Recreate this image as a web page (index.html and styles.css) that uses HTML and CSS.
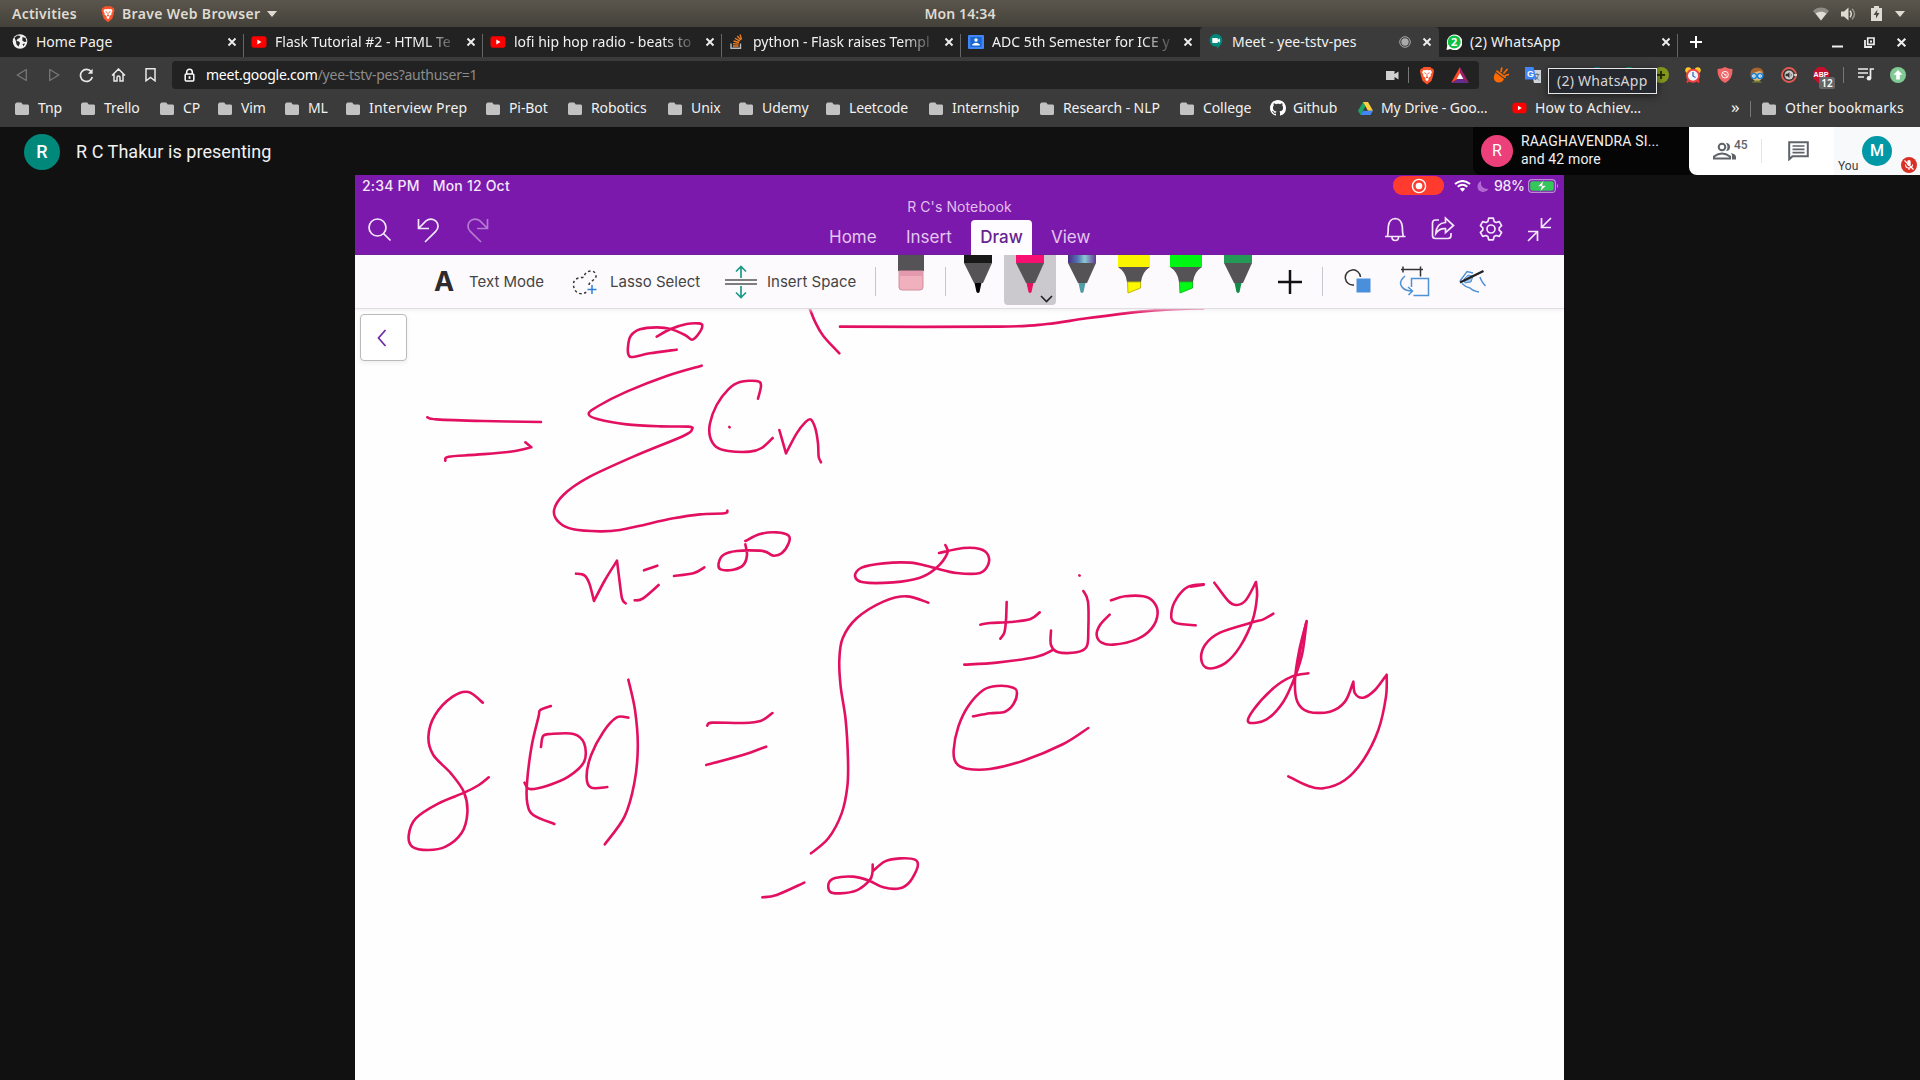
FILE: index.html
```html
<!DOCTYPE html>
<html lang="en">
<head>
<meta charset="utf-8">
<title>Meet - yee-tstv-pes</title>
<link rel="stylesheet" href="styles.css">
</head>
<body>
<svg class="defs" width="0" height="0" aria-hidden="true">
  <symbol id="folder" viewBox="0 0 14 13"><path d="M1.5 0.5h4.7l1.6 2H13l1 1V12l-1 1H1l-1-1V2z" fill="#c2c2c2"/></symbol>
  <symbol id="close" viewBox="0 0 10 10"><path d="M1.5 1.5l7 7M8.500 1.500l-7 7" stroke="#eee" stroke-width="1.9"/></symbol>
  <symbol id="youtube" viewBox="0 0 16 12"><rect x=".5" y=".3" width="15" height="11.400" rx="2.600" fill="#f00"/><path d="M6.300 3.500v5l4.200-2.500z" fill="#fff"/></symbol>
  <symbol id="brave" viewBox="0 0 16 20"><path d="M4.500 1h7l1.500 1.500 1.600.3L15.500 6l-.8 2 .1 1-2 6.500L8 19.500 3.200 15.500 1.200 9l.1-1L.5 6l.9-3.200 1.600-.3z" fill="#fb542b"/><path d="M4.200 4.200l2.600.3 1.200-.6 1.200.6 2.600-.3 1.400 2.500-1.500 2.600.4 1.300-2.600 2 .2 1.800L8 16l-1.700-1.600.2-1.800-2.600-2 .4-1.300-1.500-2.600z" fill="#fff"/><path d="M4.700 6.700l2.200.7-.5 1.400zM11.300 6.700l-2.200.7.5 1.400zM7.500 8h1v3l1 1-1.500.9-1.500-.9 1-1z" fill="#fb542b"/></symbol>
</svg>

<header class="desktop-bar">
  <div class="desktop-left">
    <span class="activities">Activities</span>
    <svg width="14" height="18"><use href="#brave"/></svg>
    <span class="app-name">Brave Web Browser</span>
    <i class="caret"></i>
  </div>
  <span class="clock">Mon 14:34</span>
  <div class="desktop-right">
    <svg width="16" height="14" viewBox="0 0 16 14"><path d="M0 4C4.500-.6 11.500-.6 16 4L8 13.500z" fill="#8f8c85"/><path d="M2.600 6.500c3-2.500 7.800-2.500 10.800 0L8 13.500z" fill="#e0ddd5"/></svg>
    <svg width="16" height="14" viewBox="0 0 16 14"><path d="M0 4.500h3L7.500.5v13L3 9.500H0z" fill="#dedbd3"/><path d="M9 3.800q2.500 3.200 0 6.400" stroke="#dedbd3" stroke-width="1.500" fill="none"/><path d="M11 1.700q5 5.300 0 10.600" stroke="#96928a" stroke-width="1.500" fill="none"/></svg>
    <svg width="11" height="15" viewBox="0 0 11 15"><path d="M0 2h3V0h5v2h3v13H0z" fill="#dedbd3"/><path d="M6.500 3.500L2.500 9H5v3.500L8.500 7H6z" fill="#4b4841"/></svg>
    <i class="caret"></i>
  </div>
</header>

<nav class="tabs">
  <div class="tab"><svg width="15" height="15" viewBox="0 0 15 15"><circle cx="7.500" cy="7.500" r="7.300" fill="#f2f2f2"/><path d="M2 3.500l3-2 3 .5-1 2-2 1-1 2 2.500.5 1 1.500-1.500 3.500-2-2-.5-3zM10 3l3 1 1 3.500-2.200.5-2-1.500zM10 10l2.500-.5-1.500 2.800z" fill="#262626"/></svg><span class="tab-title">Home Page</span><svg class="x" width="10" height="10"><use href="#close"/></svg></div>
  <div class="tab"><svg width="16" height="12"><use href="#youtube"/></svg><span class="tab-title fade">Flask Tutorial #2 - HTML Te</span><svg class="x" width="10" height="10"><use href="#close"/></svg></div>
  <div class="tab"><svg width="16" height="12"><use href="#youtube"/></svg><span class="tab-title fade">lofi hip hop radio - beats to</span><svg class="x" width="10" height="10"><use href="#close"/></svg></div>
  <div class="tab"><svg width="16" height="15" viewBox="0 0 16 15"><path d="M2 9.500v4.700h9.500V9.500" fill="none" stroke="#bbb" stroke-width="1.400"/><path d="M4 12h5.600M4 9.600l5.600.5M4.600 7l5.400 1.500M6 4.300l4.800 2.800M8.300 2l3.500 4.200M11 .5l1.500 5" stroke="#f48024" stroke-width="1.300"/></svg><span class="tab-title fade">python - Flask raises Templ</span><svg class="x" width="10" height="10"><use href="#close"/></svg></div>
  <div class="tab"><svg width="16" height="14" viewBox="0 0 16 14"><rect width="16" height="14" rx="1" fill="#4285f4"/><rect x="2.300" y="2" width="11.400" height="10" fill="#1967d2"/><circle cx="8" cy="5" r="1.700" fill="#fff"/><path d="M4.300 10.500V9.300Q8 6.300 11.700 9.300v1.200z" fill="#fff"/></svg><span class="tab-title fade">ADC 5th Semester for ICE y</span><svg class="x" width="10" height="10"><use href="#close"/></svg></div>
  <div class="tab active"><svg width="15" height="15" viewBox="0 0 15 15"><path d="M7.500 0a6.300 6.300 0 0 1 6.300 6.300c0 3.700-3 6.200-5.300 8.700v-2.500A6.300 6.300 0 1 1 7.500 0z" fill="#00897b"/><path d="M3.800 4h5.400v1.700L11.400 4.300v4.400L9.200 7.300V9H3.800z" fill="#fff"/></svg><span class="tab-title">Meet - yee-tstv-pes</span><svg width="12" height="12" viewBox="0 0 12 12"><circle cx="6" cy="6" r="5.300" fill="none" stroke="#aaa"/><circle cx="6" cy="6" r="3.700" fill="#aaa"/></svg><svg class="x" width="10" height="10"><use href="#close"/></svg></div>
  <div class="tab last"><svg width="16" height="16" viewBox="0 0 16 16"><path d="M.5 16l.8-5A7.800 7.800 0 1 1 4.500 15z" fill="#fff"/><circle cx="8.200" cy="7.900" r="6.500" fill="#0dc143"/><text x="8.200" y="11.800" text-anchor="middle" class="wa-count">2</text></svg><span class="tab-title">(2) WhatsApp</span><svg class="x" width="10" height="10"><use href="#close"/></svg></div>
  <svg class="new-tab" width="12" height="12" viewBox="0 0 12 12"><path d="M6 0v12M0 6h12" stroke="#fff" stroke-width="2"/></svg>
  <div class="window-buttons">
    <svg width="11" height="11" viewBox="0 0 11 11"><path d="M0 9.500h11" stroke="#eee" stroke-width="2"/></svg>
    <svg width="11" height="11" viewBox="0 0 11 11"><path d="M3.700 1h6.300v6.300H3.700z" fill="none" stroke="#eee" stroke-width="1.700"/><path d="M6 3.500h2v2H6z" fill="#eee"/><path d="M1 3v7h7" fill="none" stroke="#eee" stroke-width="1.800"/></svg>
    <svg width="11" height="11"><use href="#close"/></svg>
  </div>
</nav>

<div class="toolbar">
  <div class="nav-buttons">
    <svg width="12" height="14" viewBox="0 0 12 14"><path d="M10.300 1.500v11L1.200 7z" fill="none" stroke="#777" stroke-width="1.300" stroke-linejoin="round"/></svg>
    <svg width="12" height="14" viewBox="0 0 12 14"><path d="M1.700 1.500v11L10.800 7z" fill="none" stroke="#777" stroke-width="1.300" stroke-linejoin="round"/></svg>
    <svg width="15" height="15" viewBox="0 0 15 15"><path d="M12.300 3.800A6 6 0 1 0 13.300 9" fill="none" stroke="#e8e8e8" stroke-width="1.700"/><path d="M13.600.8v5H8.800z" fill="#e8e8e8"/></svg>
    <svg width="15" height="14" viewBox="0 0 15 14"><path d="M1 7.500L7.500 1 14 7.500M3 6v7h3V9.500a1.500 1.500 0 0 1 3 0V13h3V6" fill="none" stroke="#e8e8e8" stroke-width="1.500"/></svg>
    <svg width="11" height="14" viewBox="0 0 11 14"><path d="M1 .8h9v12l-4.500-3.300L1 12.800z" fill="none" stroke="#e8e8e8" stroke-width="1.500"/></svg>
  </div>
  <div class="address">
    <svg width="11" height="14" viewBox="0 0 11 14"><path d="M2.700 6V4a2.800 2.800 0 0 1 5.600 0v2" fill="none" stroke="#fff" stroke-width="1.500"/><rect x="1.200" y="6" width="8.600" height="7" rx="1" fill="none" stroke="#fff" stroke-width="1.500"/><rect x="4.600" y="8.200" width="1.800" height="2.600" fill="#fff"/></svg>
    <span class="url"><b>meet.google.com</b><em>/yee-tstv-pes?authuser=1</em></span>
    <div class="address-actions">
      <svg width="13" height="9" viewBox="0 0 13 9"><path d="M0 0h8.500v3L12.500.5v8L8.500 6v3H0z" fill="#d0d0d0"/></svg>
      <i class="rule"></i>
      <svg width="16" height="19"><use href="#brave"/></svg>
      <svg width="18" height="16" viewBox="0 0 18 16"><path d="M9 0L0 16l9-5z" fill="#ff4724"/><path d="M9 0l9 16-9-5z" fill="#9e1f63"/><path d="M0 16h18l-9-5z" fill="#662d91"/><path d="M9 6l-3.400 6h6.800z" fill="#fff"/></svg>
    </div>
  </div>
  <div class="extensions">
    <svg width="16" height="16" viewBox="0 0 16 16"><path d="M2.500 5.500L11 12Q9.500 15.500 5.500 15.500C2 15.500.3 12.500 1 9z" fill="#ff6a00"/><path d="M4 4.200l8 6M8 4.500L8.800 1M11 6l3-3.500M12.500 8.500l3-1" stroke="#ff6a00" stroke-width="1.700" stroke-linecap="round"/></svg>
    <svg width="16" height="16" viewBox="0 0 16 16"><path d="M6 3h10v13H9z" fill="#d2d5da"/><path d="M0 0h8.500l3.200 12.500H0z" fill="#4285f4"/><path d="M9.500 7.500h5M12 6v1.500M13.500 7.500Q13 11 10 13M10.500 9.500l3.500 4" stroke="#607d8b" stroke-width="1" fill="none"/><text x="2" y="9.500" class="translate-g">G</text></svg>
    <span></span>
    <i class="dot blue"></i>
    <i class="dot teal"></i>
    <svg width="16" height="16" viewBox="0 0 16 16"><circle cx="8" cy="8" r="8" fill="#84981d"/><path d="M8 4v8M4 8h8" stroke="#293000" stroke-width="2"/></svg>
    <svg width="16" height="16" viewBox="0 0 16 16"><circle cx="3.300" cy="3.200" r="3" fill="#ffc928"/><circle cx="12.700" cy="3.200" r="3" fill="#ffc928"/><path d="M3.500 13L2 15.600M12.500 13l1.500 2.600" stroke="#f33" stroke-width="2"/><circle cx="8" cy="8.700" r="6" fill="#eaf6ff" stroke="#f24242" stroke-width="2"/><path d="M8 5v4l2.500 1.500" stroke="#46a" fill="none" stroke-width="1.300"/></svg>
    <svg width="16" height="16" viewBox="0 0 16 16"><path d="M8 0q3.500 2 7.500 2Q16 12 8 16 0 12 .5 2 4.500 2 8 0z" fill="#ef6666"/><circle cx="8" cy="7.700" r="3.300" fill="none" stroke="#fff" stroke-width=".9"/><path d="M5.700 5.400l4.600 4.600M7 7.700h2.500" stroke="#fff" stroke-width=".8"/></svg>
    <svg width="16" height="16" viewBox="0 0 16 16"><path d="M1.500 9Q0 1 8 .5 16 1 14.500 9z" fill="#a8642e"/><path d="M2.500 8Q4 5 11 4q3 1 2.500 5-.5 5-5.500 5T2.500 8z" fill="#e9b878"/><path d="M2.500 15.500q5.500-4 11 0z" fill="#74812b"/><circle cx="4.900" cy="9" r="2.500" fill="#fff" stroke="#1683d8" stroke-width="1.500"/><circle cx="11.100" cy="9" r="2.500" fill="#fff" stroke="#1683d8" stroke-width="1.500"/><path d="M4.500 9h1M10.700 9h1" stroke="#333"/></svg>
    <svg width="16" height="16" viewBox="0 0 16 16"><circle cx="8" cy="8" r="7" fill="#333" stroke="#e55b53" stroke-width="1.800"/><circle cx="8" cy="8" r="4.500" fill="#ccc"/><path d="M4.600 6.800h2L8.500 5v6L6.600 9.200h-2zM9.800 6q1.600 2 0 4" fill="#333"/><path d="M13 8h3" stroke="#eee" stroke-width="1.500"/></svg>
    <div class="abp"><svg width="16" height="16" viewBox="0 0 16 16"><path d="M5 0h6l5 5v6l-5 5H5l-5-5V5z" fill="#c70d2c"/><text x="8" y="9.500" text-anchor="middle" class="abp-text">ABP</text></svg><span class="badge">12</span></div>
  </div>
  <i class="rule"></i>
  <svg class="playlist" width="16" height="13" viewBox="0 0 16 13"><path d="M0 1h10M0 5h10M0 9h6M12.500 10V1H16" fill="none" stroke="#eee" stroke-width="1.700"/><circle cx="11" cy="10.300" r="2.300" fill="#eee"/></svg>
  <svg class="update" width="16" height="16" viewBox="0 0 16 16"><circle cx="8" cy="8" r="8" fill="#81c995"/><path d="M8 3l4.500 4.700H9.800V12.500H6.200V7.700H3.500z" fill="#fff"/></svg>
  <div class="tooltip">(2) WhatsApp</div>
</div>

<div class="bookmarks">
  <a><svg width="14" height="13"><use href="#folder"/></svg>Tnp</a>
  <a><svg width="14" height="13"><use href="#folder"/></svg>Trello</a>
  <a><svg width="14" height="13"><use href="#folder"/></svg>CP</a>
  <a><svg width="14" height="13"><use href="#folder"/></svg>Vim</a>
  <a><svg width="14" height="13"><use href="#folder"/></svg>ML</a>
  <a><svg width="14" height="13"><use href="#folder"/></svg>Interview Prep</a>
  <a><svg width="14" height="13"><use href="#folder"/></svg>Pi-Bot</a>
  <a><svg width="14" height="13"><use href="#folder"/></svg>Robotics</a>
  <a><svg width="14" height="13"><use href="#folder"/></svg>Unix</a>
  <a><svg width="14" height="13"><use href="#folder"/></svg>Udemy</a>
  <a><svg width="14" height="13"><use href="#folder"/></svg>Leetcode</a>
  <a><svg width="14" height="13"><use href="#folder"/></svg>Internship</a>
  <a><svg width="14" height="13"><use href="#folder"/></svg>Research - NLP</a>
  <a><svg width="14" height="13"><use href="#folder"/></svg>College</a>
  <a><svg width="16" height="16" viewBox="0 0 16 16"><path d="M8 0C3.580 0 0 3.580 0 8c0 3.540 2.290 6.530 5.470 7.590.4.070.55-.17.55-.38 0-.19-.01-.82-.01-1.490-2.010.37-2.530-.49-2.690-.94-.09-.23-.48-.94-.82-1.130-.28-.15-.68-.52-.01-.53.63-.01 1.080.58 1.230.82.720 1.210 1.870.87 2.330.66.070-.52.280-.87.510-1.070-1.780-.2-3.640-.89-3.640-3.950 0-.87.310-1.590.82-2.150-.08-.2-.36-1.020.08-2.120 0 0 .67-.21 2.200.82.640-.18 1.320-.27 2-.27s1.360.09 2 .27c1.530-1.040 2.200-.82 2.200-.82.440 1.100.16 1.920.08 2.120.51.560.82 1.270.82 2.150 0 3.070-1.870 3.750-3.650 3.950.29.250.54.730.54 1.480 0 1.070-.01 1.930-.01 2.200 0 .21.15.46.55.38A8 8 0 0 0 16 8c0-4.420-3.580-8-8-8z" fill="#fff"/></svg>Github</a>
  <a><svg width="15" height="13" viewBox="0 0 15 13"><path d="M5 0L0 8.700 2.500 13l5-8.700z" fill="#1fa463"/><path d="M5 0h5l5 8.700h-5z" fill="#ffcf40"/><path d="M5 8.700h10L12.500 13h-10z" fill="#4285f4"/></svg>My Drive - Goo…</a>
  <a><svg width="15" height="12"><use href="#youtube"/></svg>How to Achiev…</a>
  <span class="more">»</span>
  <i class="rule"></i>
  <a><svg width="14" height="13"><use href="#folder"/></svg>Other bookmarks</a>
</div>

<main class="meet">
  <div class="presenter"><span class="avatar green">R</span>R C Thakur is presenting</div>
  <section class="meet-panel">
    <div class="people"><span class="avatar pink">R</span><p>RAAGHAVENDRA SI...<br>and 42 more</p></div>
    <div class="meet-actions">
      <svg class="group" width="25" height="18" viewBox="0 0 25 18"><circle cx="9" cy="5" r="3.300" fill="none" stroke="#5f6368" stroke-width="2"/><path d="M1 16.500v-2Q9 8.500 17 14.500v2z" fill="none" stroke="#5f6368" stroke-width="2"/><path d="M13 1q4 0 4 4t-4 4q3-4 0-8zM18 11q5 1 5 4v2.500h-4V14q0-1.700-1-3z" fill="#5f6368"/></svg><sup>45</sup>
      <i></i>
      <svg width="21" height="20" viewBox="0 0 21 20"><path d="M1.200 1.200h18.600v14H4.500L1.200 18.300z" fill="none" stroke="#5f6368" stroke-width="2"/><path d="M4.500 5h12M4.500 8.300h12M4.500 11.600h12" stroke="#5f6368" stroke-width="1.700"/></svg>
    </div>
    <div class="self"><span class="you">You</span><span class="avatar cyan">M</span>
      <svg class="muted" width="16" height="16" viewBox="0 0 16 16"><circle cx="8" cy="8" r="8" fill="#d93025"/><rect x="6.300" y="3" width="3.400" height="6" rx="1.700" fill="#fff"/><path d="M4.500 7.500q0 3.500 3.500 3.500t3.500-3.500M8 11v2M3.500 3.500l9 9" fill="none" stroke="#fff" stroke-width="1.100"/></svg>
    </div>
  </section>

  <section class="shared">
    <div class="note-head">
      <div class="status">
        <span class="time">2:34 PM</span><span class="date">Mon 12 Oct</span>
        <span class="record"><svg width="16" height="16" viewBox="0 0 16 16"><circle cx="8" cy="8" r="6.600" fill="none" stroke="#fff" stroke-width="1.400"/><circle cx="8" cy="8" r="3.300" fill="#fff"/></svg></span>
        <svg width="17" height="12" viewBox="0 0 17 12"><path d="M1 4Q8.500-2 16 4M3.700 6.700q4.800-4 9.600 0" fill="none" stroke="#fff" stroke-width="2"/><path d="M5.800 8.800q2.700-2 5.400 0L8.500 11.800z" class="wifi-dot"/></svg>
        <svg class="moon" width="12" height="13" viewBox="0 0 12 13"><path d="M4 1Q3 9 11.500 9 9 12.500 5.500 12 .5 11 .5 6.500.5 3 4 1z" fill="#b268d3"/></svg>
        <span class="percent">98%</span>
        <svg width="31" height="14" viewBox="0 0 31 14"><rect x=".6" y=".6" width="26.800" height="12.800" rx="3.500" fill="none" stroke="#bd8ad6" stroke-width="1.200"/><rect x="2.200" y="2.200" width="23.600" height="9.600" rx="2" fill="#34c759"/><path d="M29 4.800q2 2.200 0 4.400z" fill="#bd8ad6"/><path d="M15.500 1.500L9.500 7.500h4l-1.500 5 6.500-6h-4z" fill="#fff" stroke="#34a050" stroke-width=".5"/></svg>
      </div>
      <div class="note-left">
        <svg width="23" height="23" viewBox="0 0 23 23"><circle cx="9.500" cy="9.500" r="8.500"/><path d="M15.500 15.500l7 7"/></svg>
        <svg width="23" height="24" viewBox="0 0 23 24"><path d="M1.500 1v9.500H12M1.500 10.500L9 2.900C13.500-.8 21 1.500 21 8.500c0 2.500-1.200 3.900-2.500 5.200L8 24"/></svg>
        <svg class="dim" width="23" height="24" viewBox="0 0 23 24"><path d="M21.500 1v9.500H11M21.500 10.500L14 2.900C9.500-.8 2 1.500 2 8.500c0 2.500 1.200 3.900 2.500 5.200L15 24"/></svg>
      </div>
      <div class="note-middle">
        <div class="note-title">R C's Notebook</div>
        <div class="note-tabs"><span>Home</span><span>Insert</span><span class="selected">Draw</span><span>View</span></div>
      </div>
      <div class="note-right">
        <svg width="23" height="25" viewBox="0 0 23 25"><path d="M1 19.500h20.500M3.500 19.500c.5-3 .8-5 .8-10Q5 2 11.300 1.500 17.500 2 18.300 9.500q0 6 1 10M8 20q0 3.500 3.300 3.500T14.500 20"/></svg>
        <svg width="24" height="23" viewBox="0 0 24 23"><path d="M8 3H4.500Q1.500 3 1.500 6v12.500q0 3 3 3H17q3 0 3-3v-2.500M14.500 1.200L22.500 8.500l-8 7.200v-4Q8.500 11 4.800 16.500 5.500 6 14.500 5.500z"/></svg>
        <svg width="24" height="24" viewBox="0 0 24 24"><path d="M9.700 1.200h4.600l.8 3.200 2 1.100 3.200-.9 2.300 4-2.400 2.300v2.200l2.400 2.300-2.300 4-3.200-.9-2 1.100-.8 3.200H9.700l-.8-3.200-2-1.100-3.200.9-2.300-4 2.400-2.300v-2.200L1.400 8.600l2.300-4 3.200.9 2-1.100z" stroke-linejoin="round"/><circle cx="12" cy="12" r="4"/></svg>
        <svg width="25" height="25" viewBox="0 0 25 25"><path d="M24 1L14.500 10.500M14.500 1v9.500H24M1 24l9.500-9.500M1 14.500h9.500V24"/></svg>
      </div>
    </div>

    <div class="ribbon">
      <div class="tool"><strong>A</strong><span>Text Mode</span></div>
      <div class="tool lasso"><svg width="26" height="27" viewBox="0 0 26 27"><path d="M17 16C17 12 25 11 24 6 23 0 13 1 12 8 9 9 1 8 1.500 16 2 26 12 26 14 23" fill="none" stroke="#333" stroke-width="1.500" stroke-dasharray="2.500 2.500"/><path d="M20 16v9M15.500 20.500h9" stroke="#2b80d8" stroke-width="1.500"/></svg><span>Lasso Select</span></div>
      <div class="tool space"><svg width="34" height="34" viewBox="0 0 34 34"><path d="M1 15h32M1 19h32" stroke="#555" stroke-width="1.500"/><path d="M17 13V1.500M12 6.500l5-5 5 5M17 21v11.500M12 27.500l5 5 5-5" fill="none" stroke="#1c9a88" stroke-width="1.700"/></svg><span>Insert Space</span></div>
      <i></i>
      <svg class="pen" width="28" height="36" viewBox="0 0 28 36"><path d="M1 0h26v16H1z" fill="#555355"/><path d="M2 16h24v16q0 3-3 3H5q-3 0-3-3z" fill="#f0b0bd" stroke="#cf8e9f"/><path d="M2 16h24v5H2z" fill="#e399ae"/></svg>
      <i></i>
      <svg class="pen" width="30" height="40" viewBox="0 0 30 40"><path d="M1 0h28v8H1z" fill="#181818"/><path d="M1 8h28L20 28h-9z" fill="#555355"/><path d="M11.500 28h7L16.500 37q-1.500 2-3 0z" fill="#000"/></svg>
      <div class="pen-selected"><svg class="pen" width="30" height="40" viewBox="0 0 30 40"><path d="M1 0h28v8H1z" fill="#f70f72"/><path d="M1 8h28L20 28h-9z" fill="#555355"/><path d="M11.500 28h7L16.500 37q-1.500 2-3 0z" fill="#e8115f"/></svg><svg class="chevron" width="13" height="8" viewBox="0 0 13 8"><path d="M1 1l5.500 5.500L12 1" fill="none" stroke="#222" stroke-width="1.600"/></svg></div>
      <svg class="pen" width="30" height="40" viewBox="0 0 30 40"><defs><linearGradient id="galaxy"><stop stop-color="#4d2b84"/><stop offset=".35" stop-color="#5276b4"/><stop offset=".6" stop-color="#8acad3"/><stop offset="1" stop-color="#633792"/></linearGradient></defs><path d="M1 0h28v8H1z" fill="url(#galaxy)"/><path d="M1 8h28L20 28h-9z" fill="#555355"/><path d="M11.500 28h7L16.500 37q-1.500 2-3 0z" fill="#519ca5"/></svg>
      <svg class="pen" width="34" height="40" viewBox="0 0 34 40"><path d="M1 0h32v12H1z" fill="#f9f500"/><path d="M1 12h32q-8 5-9 15H10Q9 17 1 12z" fill="#555355"/><path d="M10.500 27h13v6l-12.500 5z" fill="#fdfa00" stroke="#c3b900"/></svg>
      <svg class="pen" width="34" height="40" viewBox="0 0 34 40"><path d="M1 0h32v12H1z" fill="#00f513"/><path d="M1 12h32q-8 5-9 15H10Q9 17 1 12z" fill="#555355"/><path d="M10.500 27h13v6l-12.500 5z" fill="#00fc16" stroke="#0ac31c"/></svg>
      <svg class="pen" width="30" height="40" viewBox="0 0 30 40"><path d="M1 0h28v8H1z" fill="#249a56"/><path d="M1 8h28L20 28h-9z" fill="#555355"/><path d="M11.500 28h7L16.500 37q-1.500 2-3 0z" fill="#118b47"/></svg>
      <svg class="add" width="24" height="24" viewBox="0 0 24 24"><path d="M12 0v24M0 12h24" stroke="#111" stroke-width="2.500"/></svg>
      <i></i>
      <svg width="28" height="25" viewBox="0 0 28 25"><path d="M10 16A7.600 7.600 0 1 1 16.500 8" fill="none" stroke="#333" stroke-width="1.500"/><rect x="12.500" y="9.500" width="14" height="14" fill="#4a8fdb"/></svg>
      <svg width="31" height="31" viewBox="0 0 31 31"><path d="M2 3.500h22M4 .5v6M21.500.5v10" stroke="#333" stroke-width="1.500"/><path d="M12.500 21v-8.500h17v17h-15M6 10Q-1 16 3 21q3 4 10 4M9 21l4.500 4-4 4" fill="none" stroke="#4d91d5" stroke-width="1.500"/></svg>
      <svg width="28" height="24" viewBox="0 0 28 24"><path d="M1 11L8 1.500l6 1.500M3 13.500q4 4 8 4.500 3 3 9 4M21 7q1 4 5.500 9" fill="none" stroke="#4d91d5" stroke-width="1.400"/><path d="M5 9l4-4 5 1-2 6-6 1z" fill="#9fc4ea" stroke="#4d91d5"/><path d="M1 12.500L24.500 1" stroke="#222" stroke-width="2.300"/></svg>
    </div>

    <div class="page">
      <button class="back" aria-label="Back"><svg width="10" height="18" viewBox="0 0 10 18"><path d="M8.500 1L1.500 9l7 8" fill="none" stroke="#6f2aa5" stroke-width="1.700"/></svg></button>
      <svg id="ink" class="ink" viewBox="355 309 1209 771"></svg>
    </div>
  </section>
</main>
<script src="ink.js"></script>
</body>
</html>
```
FILE: styles.css
```css
* { box-sizing: border-box; }
body { margin: 0; width: 1920px; height: 1080px; overflow: hidden; background: #111; color: #f1f1f1; font: 14px/18px "Noto Sans", "Open Sans", sans-serif; }
svg { display: block; flex: none; }
.defs { position: absolute; }
.desktop-bar { height: 27px; display: grid; grid-template-columns: 1fr auto 1fr; align-items: center; background: linear-gradient(#5b564d, #43413a); color: #dfdbd2; font-weight: 600; font-size: 14px; }
.desktop-left { display: flex; align-items: center; padding-left: 12px; }
.activities { width: 89px; letter-spacing: .25px; }
.app-name { width: 145px; margin-left: 7px; white-space: nowrap; letter-spacing: .35px; }
.clock { letter-spacing: .1px; }
.caret { border: 5px solid transparent; border-top: 6px solid #dfdbd2; border-bottom: 0; }
.desktop-right { display: flex; justify-content: flex-end; align-items: center; gap: 13px; padding-right: 15px; }
.desktop-right svg:first-child { margin-right: -1px; }
.desktop-right svg:nth-child(3) { margin-left: 1px; }

.tabs { height: 30px; background: #222; padding-left: 5px; display: flex; align-items: center; }
.tab { width: 239px; height: 23px; margin-top: 7px; display: flex; align-items: center; padding: 0 6px 8px 7px; border-right: 1px solid #666; }
.tab > svg:first-child { width: 16px; }
.tab-title { flex: 1; margin-left: 8px; white-space: nowrap; }
.tab .x { margin-left: 8px; }
.fade { -webkit-mask-image: linear-gradient(90deg, #000 82%, transparent 101%); mask-image: linear-gradient(90deg, #000 82%, transparent 101%); }
.tab:nth-child(5) { border-color: transparent; }
.tab.active { background: #3b3b3b; height: 30px; margin-top: 0; padding: 0 7px 1px 8px; border: 0; border-radius: 4px 4px 0 0; }
.tab.active .x { margin-left: 11px; }
.tab.last .tab-title { letter-spacing: .25px; }
.wa-count { font: 700 11px "Noto Sans", sans-serif; fill: #fff; }
.new-tab { margin-left: 12px; }
.window-buttons { display: flex; gap: 21px; margin-left: auto; padding-right: 13px; }

.toolbar { position: relative; height: 34px; background: #3b3b3b; display: flex; align-items: center; padding-left: 6px; }
.toolbar > * { flex: none; }
.nav-buttons { width: 160px; display: grid; grid-template-columns: repeat(5, 32px); place-items: center; }
.nav-buttons, .extensions { padding-top: 2px; }
.address { width: 1307px; height: 28px; margin: 2px 6px 0; background: #222; border-radius: 4px; display: flex; align-items: center; padding-left: 12px; }
.url { margin-left: 11px; letter-spacing: -.25px; }
.url b { color: #fff; font-weight: 400; }
.url em { color: #8c8c8c; font-style: normal; }
.address-actions { margin-left: auto; padding-right: 10px; display: flex; align-items: center; }
.address-actions .rule { margin: 0 10px 0 9px; }
.address-actions svg:nth-of-type(3) { margin-left: 16px; }
.rule { width: 1px; height: 16px; background: #777; }
.extensions { width: 352px; display: grid; grid-template-columns: repeat(11, 32px); place-items: center; }
.extensions + .rule { margin: 2px 14px 0 6px; }
.playlist { margin-right: 16px; }
.update { margin-top: 2px; }
.dot { width: 16px; height: 16px; border-radius: 50%; }
.dot.blue { background: #1483a8; }
.dot.teal { background: #0d967b; }
.translate-g { font: 700 9px "Liberation Sans", sans-serif; fill: #fff; }
.abp { position: relative; }
.abp-text { font: 700 7px "Liberation Sans", sans-serif; fill: #fff; }
.badge { position: absolute; left: 6px; top: 10px; width: 16px; height: 12px; border-radius: 2px; background: #666; color: #fff; font: 600 10px/12px "Noto Sans", sans-serif; text-align: center; }
.tooltip { position: absolute; left: 1548px; top: 11px; width: 109px; height: 26px; border: 1px solid #e6e6e6; background: #262830; box-shadow: 0 2px 8px #0008; padding: 3px 8px; color: #d6d6d6; white-space: nowrap; letter-spacing: .25px; z-index: 2; }

.bookmarks { height: 36px; padding-left: 15px; background: #3b3b3b; display: grid; align-items: center; grid-template-columns: 66px 79px 58px 67px 61px 140px 82px 100px 71px 87px 103px 111px 140px 90px 88px 154px 219px 19px 12px auto; }
.bookmarks a { display: flex; align-items: center; white-space: nowrap; margin-top: -2px; letter-spacing: -.1px; }
.bookmarks a svg { margin-right: 9px; }
.bookmarks a:nth-child(15) svg { margin-right: 7px; }
.bookmarks a:nth-child(16) svg, .bookmarks a:nth-child(17) svg { margin-right: 8px; }
.bookmarks a:nth-child(6), .bookmarks a:nth-child(17), .bookmarks a:last-child { letter-spacing: .2px; }
.more { font-size: 17px; margin-top: -4px; }

.meet { height: 953px; display: grid; grid-template: 48px 905px / 1fr 447px; font-family: Roboto, sans-serif; }
.presenter { display: flex; align-items: center; padding: 1px 0 0 24px; font-size: 18px; letter-spacing: .05px; }
.avatar { border-radius: 50%; display: grid; place-items: center; color: #fff; flex: none; }
.green { width: 36px; height: 36px; margin-right: 16px; background: #00897b; font-size: 18px; font-weight: 500; }
.pink { width: 32px; height: 32px; background: #ec407a; font-size: 16px; }
.cyan { width: 30px; height: 30px; background: #0097a7; font-size: 16px; font-weight: 500; }
.meet-panel { display: grid; grid-template-columns: 216px 145px 86px; background: #050505; border-bottom-left-radius: 8px; }
.people { display: flex; align-items: center; padding-left: 8px; font-size: 14px; }
.people p { margin: -2px 0 0 8px; letter-spacing: .15px; white-space: nowrap; }
.meet-actions { background: #fff; border-bottom-left-radius: 8px; display: flex; align-items: center; padding-left: 24px; color: #5f6368; }
.meet-actions sup { align-self: start; margin: 9px 0 0 -4px; font-size: 12px; font-weight: 500; }
.meet-actions i { width: 1px; height: 24px; background: #e4e5e7; margin: 0 26px 0 13px; }
.self { position: relative; background: #f8f9fa; padding: 9px 0 0 28px; }
.you { position: absolute; left: 4px; top: 30px; color: #3c4043; font-size: 12px; }
.muted { position: absolute; left: 67px; top: 30px; }

.shared { grid-column: 1 / 3; width: 1209px; margin-left: 355px; display: grid; grid-template-rows: 80px 54px 1fr; font-family: Inter, "Liberation Sans", sans-serif; background: #fefefe; }
.note-head { background: #7b19ac; display: grid; grid-template: 22px 58px / 340px 1fr 340px; border-bottom: 1px solid #702098; }
.note-head svg { fill: none; }
.status { grid-column: 1 / 4; display: flex; align-items: center; padding: 0 5px 0 7px; font-size: 14px; font-weight: 500; color: #f3e8f8; }
.time, .date { letter-spacing: .2px; }
.date { margin-left: 13px; }
.record { width: 51px; height: 19px; border-radius: 9px; background: #ff3b30; display: grid; place-items: center; margin: -1px 10px 0 auto; }
.wifi-dot { fill: #fff; }
.moon { margin: 0 5px 0 6px; }
.percent { margin-right: 4px; width: 30px; letter-spacing: -.3px; }
.note-left { display: flex; align-items: start; gap: 26px; padding: 21px 0 0 13px; }
.note-left svg, .note-right svg { stroke: #f5e8fa; stroke-width: 1.700; overflow: visible; }
.note-left .dim { stroke: #b47bd0; }
.note-middle { display: grid; grid-template-rows: 23px 35px; }
.note-title { padding-top: 1px; text-align: center; font-size: 14px; color: #e2bef0; letter-spacing: .1px; }
.note-tabs { display: grid; grid-template-columns: 77px 65px 61px 80px; padding-left: 134px; font-size: 17px; line-height: 35px; color: #e5c6f1; }
.note-tabs .selected { width: 61px; height: 35px; border-radius: 4px 4px 0 0; background: #fefcff; color: #67228f; font-weight: 500; text-align: center; }
.note-tabs span:last-child { padding-left: 19px; }
.note-right { display: flex; justify-content: flex-end; align-items: start; gap: 24px; padding: 20px 12px 0 0; }

.ribbon { background: #fcfafd; border-bottom: 1px solid #dfdde1; display: grid; align-items: center; grid-template-columns: 138px 152px 151px 21px 49px 7px repeat(7, 52px) 28px 55px 60px 50px; padding-left: 79px; box-shadow: 0 1px 4px #eee; clip-path: inset(0 0 -6px 0); z-index: 1; color: #444; font-size: 15px; }
.ribbon > i { width: 1px; height: 29px; background: #c8c6ca; }
.ribbon > i:last-of-type { margin-left: 6px; }
.tool { display: flex; align-items: center; white-space: nowrap; padding-top: 1px; }
.tool strong { font-size: 27px; color: #2d2b2e; width: 35px; }
.lasso svg { margin-right: 12px; }
.space svg { margin-right: 9px; }
.pen { align-self: start; justify-self: center; }
.ribbon > .pen:nth-child(5) { justify-self: start; margin-left: 1px; }
.pen-selected { position: relative; align-self: start; height: 50px; border-radius: 0 0 4px 4px; background: #ccc9ce; display: grid; }
.chevron { position: absolute; right: 3px; bottom: 2px; }
.add { justify-self: center; }
.page { position: relative; padding: 5px; }
.back { width: 47px; height: 47px; padding: 0 3px 0 0; display: grid; place-items: center; background: #fff; border: 1px solid #bbb8be; border-radius: 4px; box-shadow: 0 2px 4px #eee; }
.ink { position: absolute; inset: 0; width: 1209px; height: 771px; }
.ink path { fill: none; stroke: #e31062; stroke-width: 2.600; stroke-linecap: round; stroke-linejoin: round; }
```
FILE: ink.js
```js
// Pen strokes by area of the note; a repeated point makes a sharp corner.
const areas = [
  { at: [400, 300], scale: [3, 3], strokes: [
    "770,110 812,87 860,72 895,70 907,76 897,100 877,119 855,105 812,87 770,82 720,88 692,108 684,140 686,165 700,171 750,160 830,149",
    "905,197 800,228 680,275 595,318 566,342 595,358 680,373 780,379 865,380 876,388 850,408 700,470 560,535 490,585 462,632 478,668 520,688 600,694 660,690 720,677 820,655 900,643 973,640 982,632",
    "82,352 110,358 250,363 423,366",
    "136,482 146,470 230,464 330,455 394,442 394,442 376,427",
    "1074,296 1083,256 1070,243 1020,246 985,268 950,315 930,370 930,410 948,440 985,453 1050,455 1085,444 1118,414",
    "988,381 989,382",
    "1138,390 1158,460 1158,460 1190,400 1215,368 1232,358 1246,385 1254,430 1256,470 1263,487",
    "528,821 553,826 568,850 582,903 582,903 615,840 651,782 651,782 657,830 666,895 677,910",
    "732,811 772,797", "704,901 728,896 776,855", "822,828 880,820 913,802",
    "1036,733 1041,765 1030,795 1000,809 962,808 956,790 970,765 1010,753 1080,752 1103,758 1120,767 1145,760 1166,730 1166,707 1130,697 1080,702 1036,723",
    "1227,20 1245,65 1270,108 1318,160"
  ] },
  { at: [820, 170], scale: [3, 3], strokes: ["60,470 540,470 680,462 800,445 960,425 1050,418 1150,415"] },
  { at: [750, 520], scale: [3, 3], strokes: [
    "586,75 592,100 558,145 510,173 430,187 340,187 315,168 335,143 400,130 480,128 540,140 558,145 620,159 690,159 714,135 714,105 690,87 640,84 567,99",
    "535,248 470,229 400,245 320,295 278,355 268,420 272,500 287,600 294,720 292,800 275,880 235,955 183,1000",
    "770,246 768,300 763,338 751,356", "691,314 720,309 780,306 840,298 869,277",
    "643,434 740,428 860,410 908,390",
    "903,332 903,375 925,397 980,397 1010,380 1015,330 1014,245 1000,213", "988,166 989,167",
    "669,589 720,580 765,575 790,553 801,520 790,503 740,498 700,510 655,558 625,620 611,690 618,728 650,746 720,747 820,722 940,672 1015,624",
    "37,1132 80,1125 163,1088",
    "368,1034 367,1060 358,1082 320,1111 270,1120 240,1115 236,1090 255,1074 310,1070 358,1082 400,1102 450,1105 480,1085 503,1040 495,1019 450,1015 405,1024 370,1052"
  ] },
  { at: [400, 600], scale: [2.851, 3], strokes: [
    "236,308 195,276 150,290 100,345 81,410 95,465 145,520 183,578 192,640 175,700 130,740 80,750 35,740 25,705 45,655 110,610 183,578 225,555 253,532",
    "430,318 400,330 395,350 375,440 362,550 363,610 380,645 440,672",
    "402,441 408,408 430,402 495,402 525,430 525,485 480,530 420,557 370,567 355,548",
    "651,353 618,352 580,395 545,465 532,530 545,563 591,561",
    "651,239 670,330 678,440 668,550 640,650 584,733",
    "876,377 890,368 980,369 1030,362 1062,339", "873,495 975,466 1044,440"
  ] },
  { at: [1100, 530], scale: [3, 3], strokes: [
    "33,211 75,199 130,199 160,215 173,250 155,295 110,328 40,344 5,338 -10,315 0,285 29,254",
    "311,163 265,170 230,205 214,250 225,278 287,286", "311,164 272,170",
    "343,158 385,213 410,225 438,210 468,156 468,156 471,200 458,270 420,350 375,400 325,415 304,390 315,345 360,308 458,277 490,268 520,251",
    "625,430 575,440 520,475 460,540 446,577 500,568 550,515 585,440 607,370 620,273 620,273 598,360 585,450 592,515 625,545 690,545 735,515 760,455 760,455 765,490 790,503 825,480 860,434 860,434 858,500 835,600 790,690 735,750 670,775 620,766 565,739",
    "619,277 604,345 591,420"
  ] }
];

const ink = document.getElementById("ink");
for (const { at, scale, strokes } of areas) {
  for (const stroke of strokes) {
    const p = stroke.split(" ").map(s => s.split(",").map((v, i) => at[i] + v / scale[i]));
    let d = `M${p[0]}`;
    for (let i = 0; i < p.length - 1; i++) {
      const a = p[i - 1] || p[i], b = p[i], c = p[i + 1], e = p[i + 2] || c;
      if (String(b) === String(c)) continue;
      d += `C${b.map((v, k) => v + (c[k] - a[k]) / 6)} ${c.map((v, k) => v - (e[k] - b[k]) / 6)} ${c}`;
    }
    const path = document.createElementNS("http://www.w3.org/2000/svg", "path");
    path.setAttribute("d", d);
    ink.append(path);
  }
}
```
